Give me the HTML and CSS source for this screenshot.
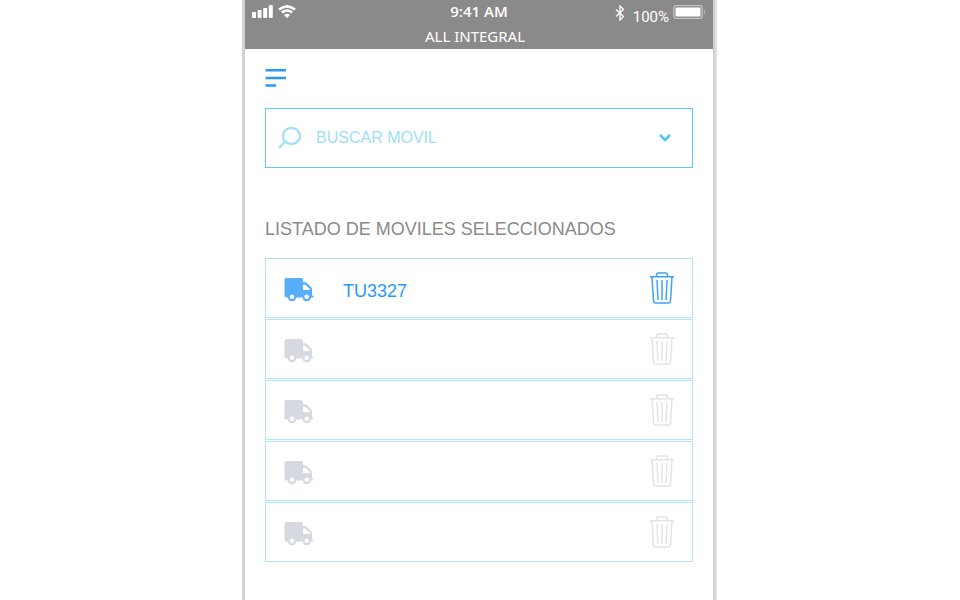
FILE: index.html
```html
<!DOCTYPE html>
<html lang="es">
<head>
<meta charset="utf-8">
<meta name="viewport" content="width=device-width, initial-scale=1">
<title>ALL INTEGRAL</title>
<link rel="stylesheet" href="styles.css">
</head>
<body>
<svg class="sprite" aria-hidden="true">
  <symbol id="truck" viewBox="0 0 30 24">
    <path fill="currentColor" fill-rule="evenodd" d="M2.500 0H17a2 2 0 0 1 2 2v2.300h2.200q1 0 1.700.7l4.400 4.400q.7.700.7 1.700v6.400h.6a1 1 0 0 1 0 2H27a4.300 4.300 0 0 1-8.500 0H12.300a4.300 4.300 0 0 1-8.500 0H2.500a2 2 0 0 1-2-2V2a2 2 0 0 1 2-2zM19 6.800v5.200h7v-.7l-4.500-4.500zM8 16.500a2.300 2.300 0 1 0 0 4.600 2.300 2.300 0 0 0 0-4.600zm14.700 0a2.300 2.300 0 1 0 0 4.600 2.300 2.300 0 0 0 0-4.600z"/>
  </symbol>
  <symbol id="trash" viewBox="0 0 24 32">
    <path fill="none" stroke="currentColor" stroke-width="1.500" d="M0 4.700h24M6.500 4.500V3q0-2 2-2h7q2 0 2 2v1.500M2 5l1.500 24q.2 2 2.200 2h12.600q2 0 2.200-2L22 5M7 8l1 20M12 8v20M17 8l-1 20"/>
  </symbol>
</svg>
<div class="phone">
  <header class="status">
    <div class="status-row">
      <div class="signals">
        <svg width="21" height="13" viewBox="0 0 21 13" fill="#fff" aria-hidden="true"><rect x="0" y="7" width="4" height="6" rx="1"/><rect x="5.600" y="5" width="4" height="8" rx="1"/><rect x="11.200" y="3" width="4" height="10" rx="1"/><rect x="16.800" y="0" width="4" height="13" rx="1"/></svg>
        <svg width="18" height="13" viewBox="0 0 18 13" aria-hidden="true"><path fill="none" stroke="#fff" stroke-width="2.600" d="M1 4.600Q9-1.800 17 4.600M3.900 7.600Q9 3.400 14.100 7.600"/><path fill="#fff" d="M6 10q3-2.500 6 0l-3 3z"/></svg>
      </div>
      <span class="time">9:41 AM</span>
      <div class="power">
        <svg width="10" height="16" viewBox="0 0 10 16" aria-hidden="true"><path fill="none" stroke="#fff" stroke-width="1.300" d="M1 4.500l7.500 7L5 15V1l3.500 3.500L1 11.500"/></svg>
        <span class="percent">100%</span>
        <svg width="33" height="14" viewBox="0 0 33 14" aria-hidden="true"><rect x=".7" y=".7" width="28.600" height="12.600" rx="2.500" fill="none" stroke="#c2c2c2" stroke-width="1.300"/><rect x="2.500" y="2.500" width="25" height="9" rx="1" fill="#fff"/><path fill="#c2c2c2" d="M31 4.500q2 2.500 0 5z"/></svg>
      </div>
    </div>
    <div class="app-name">ALL INTEGRAL</div>
  </header>
  <main class="content">
    <button class="menu" type="button" aria-label="Menú">
      <svg width="22" height="18" viewBox="0 0 22 18" aria-hidden="true"><path stroke="currentColor" stroke-width="2.500" d="M.5 1.300h20.500M.5 9h20.500M.5 16.500h10.500"/></svg>
    </button>
    <div class="search">
      <svg class="lens" width="24" height="22" viewBox="0 0 24 22" fill="none" stroke="currentColor" stroke-width="2.200" aria-hidden="true"><ellipse cx="13.500" cy="9" rx="8.600" ry="8"/><path d="M7.500 14.500L.8 21"/></svg>
      <input type="text" aria-label="Buscar móvil" placeholder="BUSCAR MOVIL">
      <button class="expand" type="button" aria-label="Mostrar lista">
        <svg width="12" height="8" viewBox="0 0 12 8" aria-hidden="true"><path fill="none" stroke="currentColor" stroke-width="2.500" d="M1 1l5 5 5-5"/></svg>
      </button>
    </div>
    <h1>LISTADO DE MOVILES SELECCIONADOS</h1>
    <ul class="list">
      <li class="item selected"><svg class="truck" aria-hidden="true"><use href="#truck"/></svg><span class="plate">TU3327</span><button class="remove" type="button" aria-label="Eliminar"><svg class="trash" aria-hidden="true"><use href="#trash"/></svg></button></li>
      <li class="item"><svg class="truck" aria-hidden="true"><use href="#truck"/></svg><span class="plate"></span><button class="remove" type="button" aria-label="Eliminar"><svg class="trash" aria-hidden="true"><use href="#trash"/></svg></button></li>
      <li class="item"><svg class="truck" aria-hidden="true"><use href="#truck"/></svg><span class="plate"></span><button class="remove" type="button" aria-label="Eliminar"><svg class="trash" aria-hidden="true"><use href="#trash"/></svg></button></li>
      <li class="item"><svg class="truck" aria-hidden="true"><use href="#truck"/></svg><span class="plate"></span><button class="remove" type="button" aria-label="Eliminar"><svg class="trash" aria-hidden="true"><use href="#trash"/></svg></button></li>
      <li class="item"><svg class="truck" aria-hidden="true"><use href="#truck"/></svg><span class="plate"></span><button class="remove" type="button" aria-label="Eliminar"><svg class="trash" aria-hidden="true"><use href="#trash"/></svg></button></li>
    </ul>
  </main>
</div>
</body>
</html>
```
FILE: styles.css
```css
* {
  box-sizing: border-box;
}

body {
  margin: 0;
  padding-right: 1px;
  background: #fff;
  font-family: "Liberation Sans", Arial, sans-serif;
}

svg {
  display: block;
  flex: none;
}

button {
  padding: 0;
  border: 0;
  background: none;
  cursor: pointer;
}

.sprite {
  position: absolute;
  width: 0;
  height: 0;
}

.phone {
  max-width: 475px;
  min-height: 100vh;
  margin: 0 auto;
  border-left: 3px solid #d2d2d2;
  border-right: 2px solid #e1e1e1;
  box-shadow: inset -2px 0 #d0d0d0;
  padding-right: 2px;
}

.status {
  padding-bottom: 1px;
  background: #8a8a8a;
  color: #fff;
}

.status-row {
  display: grid;
  grid-template-columns: 1fr auto 1fr;
  height: 24px;
  padding: 0 7px;
}

.signals {
  display: flex;
  gap: 5px;
  padding-top: 5px;
}

.time {
  font: 600 15px/22px "Open Sans", "Noto Sans", sans-serif;
}

.power {
  display: flex;
  justify-content: flex-end;
  gap: 4px;
  padding-top: 5px;
}

.percent {
  padding-left: 4px;
  font: 15px/24px Roboto, sans-serif;
}

.app-name {
  padding-right: 8px;
  font: 15px/24px "Noto Sans", "Open Sans", sans-serif;
  text-align: center;
}

.content {
  padding: 20px 20px 19px;
}

.menu {
  display: block;
  color: #2b98f8;
}

.search {
  display: flex;
  align-items: center;
  height: 60px;
  margin-top: 21px;
  padding: 0 21px 0 12px;
  border: 1px solid #5accee;
  color: #9fdff5;
}

.search input {
  flex: 1;
  min-width: 0;
  padding: 0 14px;
  border: 0;
  outline: 0;
  background: none;
  color: #45b8e8;
  font: 16px/24px "Liberation Sans", Arial, sans-serif;
}

.search input::placeholder {
  color: #9fdff5;
  opacity: 1;
}

.expand {
  color: #4cc6ee;
}

h1 {
  margin: 49px 0 17px;
  color: #8a8a8a;
  font-size: 18px;
  line-height: 24px;
  font-weight: 400;
}

.list {
  display: grid;
  gap: 1px;
  margin: 0;
  padding: 0;
  list-style: none;
}

.item {
  display: flex;
  align-items: center;
  height: 60px;
  padding: 0 18px;
  border: 1px solid #b0e6f8;
  color: #d6d9df;
}

.selected {
  color: #55adfb;
}

.truck {
  width: 30px;
  height: 24px;
  margin-top: 4px;
}

.plate {
  flex: 1;
  padding: 5px 29px 0;
  color: #2b98f8;
  font-size: 18px;
  line-height: 24px;
}

.remove {
  color: #e4e4e4;
}

.selected .remove {
  color: #3fa2f9;
}

.trash {
  width: 24px;
  height: 32px;
}
```
